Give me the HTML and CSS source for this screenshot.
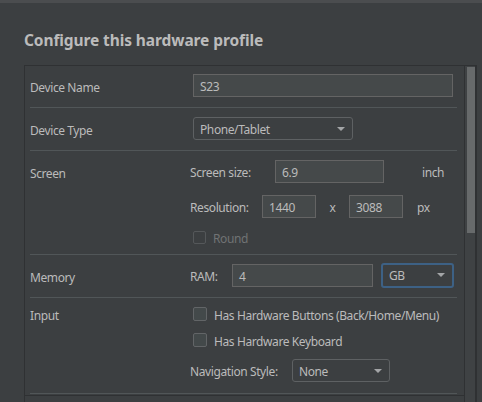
FILE: index.html
```html
<!DOCTYPE html>
<html>
<head>
<meta charset="utf-8">
<link rel="stylesheet" href="styles.css">
</head>
<body>
<div class="topbar"></div>
<h1 class="title">Configure this hardware profile</h1>
<div class="panel">
  <div class="content">
    <div class="row row-name">
      <div class="label">Device Name</div>
      <div class="value">
        <div class="field field-name">S23</div>
      </div>
    </div>
    <div class="row row-type">
      <div class="label">Device Type</div>
      <div class="value">
        <div class="combo combo-type"><span>Phone/Tablet</span><i class="arrow"></i></div>
      </div>
    </div>
    <div class="row row-screen">
      <div class="label">Screen</div>
      <div class="value stack">
        <div class="line">
          <span class="sublabel sl-size">Screen size:</span>
          <div class="field field-size">6.9</div>
          <span class="unit unit-inch">inch</span>
        </div>
        <div class="line">
          <span class="sublabel sl-res">Resolution:</span>
          <div class="field field-res">1440</div>
          <span class="times">x</span>
          <div class="field field-res">3088</div>
          <span class="unit unit-px">px</span>
        </div>
        <div class="line check-line disabled">
          <span class="checkbox"></span><span>Round</span>
        </div>
      </div>
    </div>
    <div class="row row-mem">
      <div class="label">Memory</div>
      <div class="value">
        <div class="line">
          <span class="sublabel sl-ram">RAM:</span>
          <div class="field field-ram">4</div>
          <div class="combo combo-gb focused"><span>GB</span><i class="arrow"></i></div>
        </div>
      </div>
    </div>
    <div class="row row-input">
      <div class="label">Input</div>
      <div class="value stack">
        <div class="line check-line"><span class="checkbox"></span><span>Has Hardware Buttons (Back/Home/Menu)</span></div>
        <div class="line check-line"><span class="checkbox"></span><span>Has Hardware Keyboard</span></div>
        <div class="line nav-line">
          <span class="sublabel sl-nav">Navigation Style:</span>
          <div class="combo combo-nav"><span>None</span><i class="arrow"></i></div>
        </div>
      </div>
    </div>
  </div>
  <div class="scrollbar"><div class="thumb"></div></div>
</div>
</body>
</html>
```
FILE: styles.css
```css
* { box-sizing: border-box; }
html, body { margin: 0; padding: 0; }
body {
  background: #3c3f41;
  color: #bbbbbb;
  font-family: "Noto Sans", "Open Sans", sans-serif;
  font-size: 12px;
  letter-spacing: -0.4px;
  width: 482px;
  height: 402px;
  overflow: hidden;
}
.topbar { height: 3px; background: #4b4d4f; }
.title {
  margin: 0;
  padding: 27px 0 0 24px;
  height: 62px;
  font-size: 15.5px;
  font-weight: bold;
  letter-spacing: -0.1px;
  line-height: 20px;
  color: #bbbbbb;
}
.panel {
  margin-left: 24px;
  width: 453px;
  height: 340px;
  border: 1px solid #2f3133;
  border-bottom: none;
  display: flex;
}
.content { width: 439px; display: flex; flex-direction: column; }
.content::after {
  content: "";
  display: block;
  height: 1px;
  background: #2f3133;
  margin-top: 1px;
}
.scrollbar {
  width: 12px;
  border-left: 1px solid #2f3133;
  border-right: 1px solid #2f3133;
  background: #3f4244;
  padding: 1px 0 0 2px;
}
.thumb { width: 8px; height: 166px; background: #676a6b; }

.row {
  margin: 0 7px 0 5px;
  border-bottom: 1px solid #515658;
  display: grid;
  grid-template-columns: 160px 1fr;
  align-items: start;
}
.label { line-height: 24px; padding-top: 2px; }
.row-name { padding: 8px 0 10px; height: 42px; }
.row-type { padding: 9px 0 10px; height: 43px; }
.row-screen { padding: 9px 0 8px; height: 104px; }
.row-mem { padding: 9px 0 10px; height: 43px; }
.row-input { padding: 6px 0 10px; height: 96px; }
.row-input .label { line-height: 22px; padding-top: 1px; }

.stack { display: flex; flex-direction: column; }
.row-screen .stack { gap: 12px; }
.line { display: flex; align-items: center; height: 23px; }
.line > span { padding-top: 2px; }
.check-line { height: 18px; padding-left: 3px; margin-top: -2px; }
.row-input .check-line { height: 20px; margin-top: 0; margin-bottom: 6px; }
.row-input .nav-line { margin-top: 3px; }
.disabled { color: #707374; }
.checkbox {
  width: 14px; height: 14px;
  border: 1px solid #626567;
  border-radius: 2px;
  background: #43494a;
  margin-right: 7px;
  flex: none;
  padding: 0 !important;
}
.disabled .checkbox { background: #3c3f41; border-color: #55585a; width: 13px; height: 13px; }

.field {
  height: 23px;
  line-height: 23px;
  background: #45494a;
  border: 1px solid #646464;
  padding: 0 6px;
  color: #bbbbbb;
}
.field-name { margin-left: 3px; width: 260px; }
.sublabel { flex: none; }
.sl-size { width: 85px; }
.field-size { width: 109px; }
.unit-inch { margin-left: 38px; }
.sl-res { width: 72px; }
.field-res { width: 54px; }
.times { width: 33px; text-align: center; }
.unit-px { margin-left: 14px; }
.sl-ram { width: 42px; }
.field-ram { width: 141px; }
.sl-nav { width: 102px; }

.combo {
  position: relative;
  height: 23px;
  line-height: 23px;
  border: 1px solid #5e6163;
  border-radius: 3px;
  padding: 0 6px;
  background: #3c3f41;
}
.arrow {
  position: absolute;
  right: 7px;
  top: 9px;
  width: 0; height: 0;
  border-left: 4px solid transparent;
  border-right: 4px solid transparent;
  border-top: 4px solid #a3a5a7;
}
.combo-type { margin-left: 3px; width: 160px; }
.combo-gb { margin-left: 8px; width: 73px; }
.focused {
  height: 25px;
  border: 2px solid #3d6185;
  line-height: 22px;
  padding: 0 6px;
}
.focused .arrow { top: 8px; right: 7px; }
.combo-nav { width: 98px; }
```
